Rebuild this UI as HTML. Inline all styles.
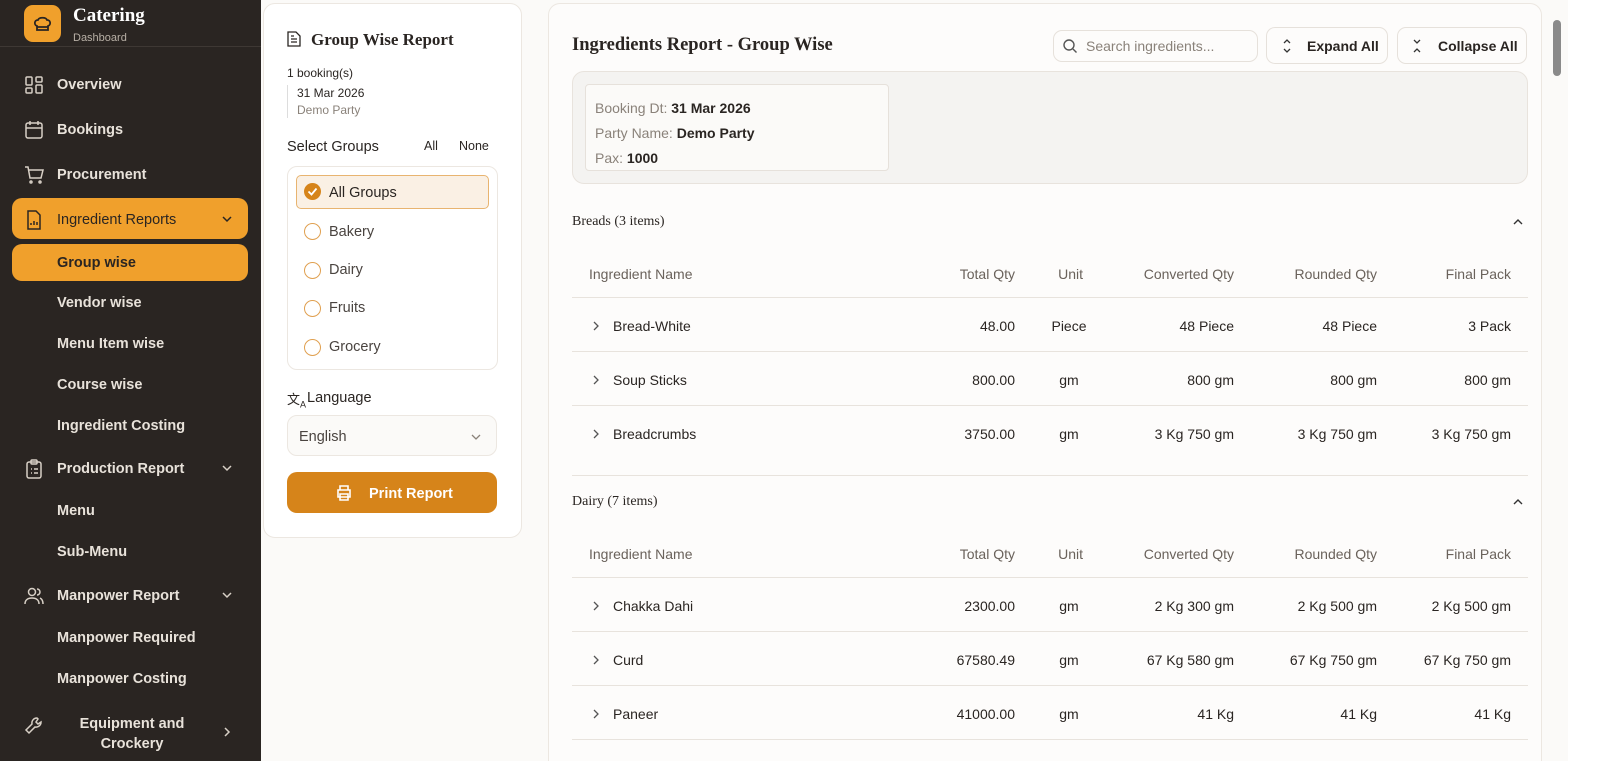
<!DOCTYPE html>
<html style="overflow:hidden;height:761px"><head><meta charset="utf-8"><style>
*{box-sizing:border-box;margin:0;padding:0}
body{width:1600px;height:761px;overflow:hidden;background:#fbfaf8;font-family:"Liberation Sans",sans-serif;color:#2a2522;position:relative}
.sb{position:absolute;left:0;top:0;width:261px;height:761px;background:#2a2522;color:#e8e2da}
.logo{position:absolute;left:24px;top:5px;width:37px;height:37px;border-radius:9px;background:#f0a02c}
.brand{position:absolute;left:73px;top:5px;font-family:"Liberation Serif",serif;font-weight:bold;font-size:19px;color:#fff}
.brandsub{position:absolute;left:73px;top:32px;font-size:11px;color:#b8b0a6}
.sep{position:absolute;left:0;top:46px;width:261px;height:1px;background:#3e3834}
.it{position:absolute;left:57px;font-size:14.5px;font-weight:bold;color:#e8e2da}
.ic{position:absolute;left:24px;width:20px;height:20px}
.act{position:absolute;left:12px;width:236px;border-radius:10px;background:#f0a02c}
.chev{position:absolute;left:220px;width:14px;height:14px}
.lp{position:absolute;left:263px;top:3px;width:259px;height:535px;background:#fff;border:1px solid #ece7e1;border-radius:12px}
.mc{position:absolute;left:548px;top:3px;width:994px;height:758px;background:#fdfcfb;border:1px solid #ece7e1;border-bottom:none;border-radius:12px 12px 0 0}
.a{position:absolute}
.radio{position:absolute;left:304px;width:17px;height:17px;border:1.5px solid #e0a050;border-radius:50%}
.gl{position:absolute;left:329px;font-size:14.5px;color:#4a4440}
.th{position:absolute;font-size:14px;color:#6a625b}
.td{position:absolute;font-size:14px;color:#2a2522}
.line{position:absolute;left:572px;width:956px;height:1px;background:#e8e3dd}
.btn{position:absolute;border:1px solid #e6e1db;border-radius:9px;background:#fdfcfb;font-size:14px;font-weight:bold}
</style></head><body>
<div class="sb">
<div class="logo"><svg width="37" height="37" viewBox="0 0 37 37"><path d="M13 21c-3-1-3-6 1-6 1-3 8-3 9 0 4 0 4 5 1 6v4h-11z M13 22h11" fill="none" stroke="#2a2522" stroke-width="1.8"/></svg></div>
<div class="brand">Catering</div><div class="brandsub">Dashboard</div><div class="sep"></div>
<svg class="ic" style="top:75px" viewBox="0 0 20 20" fill="none" stroke="#d8d0c6" stroke-width="1.5"><rect x="2" y="2" width="6" height="8" rx="1"/><rect x="12" y="2" width="6" height="5" rx="1"/><rect x="2" y="13" width="6" height="5" rx="1"/><rect x="12" y="10" width="6" height="8" rx="1"/></svg>
<div class="it" style="top:77px">Overview</div>
<svg class="ic" style="top:120px" viewBox="0 0 20 20" fill="none" stroke="#d8d0c6" stroke-width="1.5"><rect x="2" y="3" width="16" height="15" rx="2"/><path d="M2 8h16M6 1v4M14 1v4"/></svg>
<div class="it" style="top:122px">Bookings</div>
<svg class="ic" style="top:165px" viewBox="0 0 20 20" fill="none" stroke="#d8d0c6" stroke-width="1.5"><path d="M1 2h3l2 11h11l2-8H5"/><circle cx="7" cy="17" r="1"/><circle cx="16" cy="17" r="1"/></svg>
<div class="it" style="top:167px">Procurement</div>
<div class="act" style="top:198px;height:41px"></div>
<svg class="ic" style="top:210px" viewBox="0 0 20 20" fill="none" stroke="#2a2522" stroke-width="1.5"><path d="M4 1h8l4 4v14H4z M7 15v-2M10 15v-4M13 15v-3"/></svg>
<div class="it" style="top:212px;color:#2a2522;font-weight:normal">Ingredient Reports</div>
<svg class="chev" style="top:212px" viewBox="0 0 14 14" fill="none" stroke="#2a2522" stroke-width="1.5"><path d="M3 5l4 4 4-4"/></svg>
<div class="act" style="top:244px;height:37px"></div>
<div class="it" style="top:255px;color:#2a2522">Group wise</div>
<div class="it" style="top:295px">Vendor wise</div>
<div class="it" style="top:336px">Menu Item wise</div>
<div class="it" style="top:377px">Course wise</div>
<div class="it" style="top:418px">Ingredient Costing</div>
<svg class="ic" style="top:459px" viewBox="0 0 20 20" fill="none" stroke="#d8d0c6" stroke-width="1.5"><rect x="3" y="3" width="14" height="16" rx="2"/><rect x="7" y="1" width="6" height="4" rx="1"/><path d="M7 10h1M10 10h4M7 14h1M10 14h4"/></svg>
<div class="it" style="top:461px">Production Report</div>
<svg class="chev" style="top:461px" viewBox="0 0 14 14" fill="none" stroke="#d8d0c6" stroke-width="1.5"><path d="M3 5l4 4 4-4"/></svg>
<div class="it" style="top:503px">Menu</div>
<div class="it" style="top:544px">Sub-Menu</div>
<svg class="ic" style="top:586px" viewBox="0 0 20 20" fill="none" stroke="#d8d0c6" stroke-width="1.5"><circle cx="8" cy="6" r="3.5"/><path d="M1 18c0-4 3-6 7-6s7 2 7 6M13 3a3 3 0 010 6M16 12c2 1 3 3 3 6"/></svg>
<div class="it" style="top:588px">Manpower Report</div>
<svg class="chev" style="top:588px" viewBox="0 0 14 14" fill="none" stroke="#d8d0c6" stroke-width="1.5"><path d="M3 5l4 4 4-4"/></svg>
<div class="it" style="top:630px">Manpower Required</div>
<div class="it" style="top:671px">Manpower Costing</div>
<svg class="ic" style="top:716px" viewBox="0 0 20 20" fill="none" stroke="#d8d0c6" stroke-width="1.5"><path d="M13 2a5 5 0 00-5 6L2 14l3 3 6-6a5 5 0 006-5l-3 2-2-2 2-3z"/></svg>
<div class="it" style="top:714px;left:62px;text-align:center;width:140px;line-height:20px">Equipment and<br>Crockery</div>
<svg class="chev" style="top:725px" viewBox="0 0 14 14" fill="none" stroke="#d8d0c6" stroke-width="1.5"><path d="M5 3l4 4-4 4"/></svg>
</div>

<div class="lp"></div>
<svg class="a" style="left:287px;top:31px" width="14" height="16" viewBox="0 0 14 16" fill="none" stroke="#2a2522" stroke-width="1.3"><path d="M1 1h8l4 4v10H1z M4 8h6M4 11h6M4 5h3"/></svg>
<div class="a" style="left:311px;top:30px;font-family:'Liberation Serif',serif;font-weight:bold;font-size:17px">Group Wise Report</div>
<div class="a" style="left:287px;top:66px;font-size:12px">1 booking(s)</div>
<div class="a" style="left:287px;top:85px;width:1px;height:33px;background:#ddd"></div>
<div class="a" style="left:297px;top:86px;font-size:12px">31 Mar 2026</div>
<div class="a" style="left:297px;top:103px;font-size:12px;color:#8a827a">Demo Party</div>
<div class="a" style="left:287px;top:139px;font-size:14.5px">Select Groups</div>
<div class="a" style="left:424px;top:139px;font-size:12.5px">All</div>
<div class="a" style="left:459px;top:139px;font-size:12.5px">None</div>
<div class="a" style="left:287px;top:166px;width:211px;height:204px;border:1px solid #ece7e1;border-radius:10px"></div>
<div class="a" style="left:296px;top:175px;width:193px;height:34px;border:1.5px solid #e8b470;border-radius:5px;background:#faf0e4"></div>
<div class="a" style="left:304px;top:183px;width:17px;height:17px;border-radius:50%;background:#d6841a"><svg width="17" height="17"><path d="M4.5 8.5l3 3 5-6" fill="none" stroke="#fff" stroke-width="1.8"/></svg></div>
<div class="gl" style="top:185px;color:#2a2522">All Groups</div>
<div class="radio" style="top:223px"></div><div class="gl" style="top:224px">Bakery</div>
<div class="radio" style="top:262px"></div><div class="gl" style="top:262px">Dairy</div>
<div class="radio" style="top:300px"></div><div class="gl" style="top:300px">Fruits</div>
<div class="radio" style="top:339px"></div><div class="gl" style="top:339px">Grocery</div>
<div class="a" style="left:287px;top:389px;font-size:13px">文<sub style="font-size:9px">A</sub></div>
<div class="a" style="left:307px;top:390px;font-size:14.5px">Language</div>
<div class="a" style="left:287px;top:415px;width:210px;height:41px;border:1px solid #ece7e1;border-radius:10px;background:#fbfaf8"></div>
<div class="a" style="left:299px;top:429px;font-size:14.5px;color:#4a4440">English</div>
<svg class="a" style="left:469px;top:430px" width="14" height="14" fill="none" stroke="#8a827a" stroke-width="1.3"><path d="M3 5l4 4 4-4"/></svg>
<div class="a" style="left:287px;top:472px;width:210px;height:41px;border-radius:10px;background:#d6841a"></div>
<svg class="a" style="left:335px;top:484px" width="18" height="18" fill="none" stroke="#fff" stroke-width="1.6"><path d="M5 6V2h8v4M3 6h12v7H3zM5 10h8v6H5z"/></svg>
<div class="a" style="left:369px;top:486px;font-size:14.5px;font-weight:bold;color:#fff">Print Report</div>

<div class="mc"></div>
<div class="a" style="left:572px;top:35px;font-family:'Liberation Serif',serif;font-weight:bold;font-size:18.5px">Ingredients Report - Group Wise</div>
<div class="btn" style="left:1053px;top:30px;width:205px;height:32px;font-weight:normal"></div>
<svg class="a" style="left:1062px;top:38px" width="16" height="16" fill="none" stroke="#555" stroke-width="1.4"><circle cx="7" cy="7" r="5"/><path d="M11 11l3.5 3.5"/></svg>
<div class="a" style="left:1086px;top:38px;font-size:14px;color:#8a827a">Search ingredients...</div>
<div class="btn" style="left:1266px;top:27px;width:122px;height:37px"></div>
<svg class="a" style="left:1281px;top:39px" width="12" height="14" fill="none" stroke="#333" stroke-width="1.3"><path d="M3 4l3-3 3 3M3 10l3 3 3-3"/></svg>
<div class="a" style="left:1307px;top:38px;font-size:14px;font-weight:bold">Expand All</div>
<div class="btn" style="left:1397px;top:27px;width:130px;height:37px"></div>
<svg class="a" style="left:1411px;top:39px" width="12" height="14" fill="none" stroke="#333" stroke-width="1.3"><path d="M3 1l3 3 3-3M3 13l3-3 3 3"/></svg>
<div class="a" style="left:1438px;top:38px;font-size:14px;font-weight:bold">Collapse All</div>
<div class="a" style="left:572px;top:71px;width:956px;height:113px;border:1px solid #e8e3dd;border-radius:12px;background:#f4f3f1"></div>
<div class="a" style="left:585px;top:84px;width:304px;height:87px;border:1px solid #e6e1db;border-radius:4px;background:#fbfaf8"></div>
<div class="a" style="left:595px;top:96px;font-size:14px;line-height:25px;color:#8a827a">Booking Dt: <b style="color:#2a2522">31 Mar 2026</b><br>Party Name: <b style="color:#2a2522">Demo Party</b><br>Pax: <b style="color:#2a2522">1000</b></div>

<div class="a" style="left:572px;top:214px;font-family:'Liberation Serif',serif;font-size:14px">Breads (3 items)</div>
<svg class="a" style="left:1512px;top:216px" width="12" height="12" fill="none" stroke="#333" stroke-width="1.4"><path d="M2 8l4-4 4 4"/></svg>
<div class="a" style="left:572px;top:475px;width:956px;height:1px;background:#e8e3dd"></div>
<div class="a" style="left:572px;top:494px;font-family:'Liberation Serif',serif;font-size:14px">Dairy (7 items)</div>
<svg class="a" style="left:1512px;top:496px" width="12" height="12" fill="none" stroke="#333" stroke-width="1.4"><path d="M2 8l4-4 4 4"/></svg>

<div id="t"></div>
<script>
function tbl(y,rows,last){var h='';
h+='<div class="th" style="left:589px;top:'+(y-8)+'px">Ingredient Name</div>';
var cols=[[1015,'Total Qty'],[1083,'Unit'],[1234,'Converted Qty'],[1377,'Rounded Qty'],[1511,'Final Pack']];
cols.forEach(function(c){h+='<div class="th" style="right:'+(1600-c[0])+'px;top:'+(y-8)+'px">'+c[1]+'</div>'});
h+='<div class="line" style="top:'+(y+23)+'px"></div>';
rows.forEach(function(r,i){var ry=y+52+54*i;
h+='<svg class="a" style="left:591px;top:'+(ry-6)+'px" width="10" height="12" fill="none" stroke="#555" stroke-width="1.3"><path d="M3 2l4 4-4 4"/></svg>';
h+='<div class="td" style="left:613px;top:'+(ry-8)+'px">'+r[0]+'</div>';
h+='<div class="td" style="right:'+(1600-1015)+'px;top:'+(ry-8)+'px">'+r[1]+'</div>';
h+='<div class="td" style="left:1039px;width:60px;text-align:center;top:'+(ry-8)+'px">'+r[2]+'</div>';
h+='<div class="td" style="right:'+(1600-1234)+'px;top:'+(ry-8)+'px">'+r[3]+'</div>';
h+='<div class="td" style="right:'+(1600-1377)+'px;top:'+(ry-8)+'px">'+r[4]+'</div>';
h+='<div class="td" style="right:'+(1600-1511)+'px;top:'+(ry-8)+'px">'+r[5]+'</div>';
if(i<rows.length-1||last)h+='<div class="line" style="top:'+(ry+25)+'px"></div>';});
return h;}
document.getElementById('t').innerHTML=tbl(274,[['Bread-White','48.00','Piece','48 Piece','48 Piece','3 Pack'],['Soup Sticks','800.00','gm','800 gm','800 gm','800 gm'],['Breadcrumbs','3750.00','gm','3 Kg 750 gm','3 Kg 750 gm','3 Kg 750 gm']],false)+tbl(554,[['Chakka Dahi','2300.00','gm','2 Kg 300 gm','2 Kg 500 gm','2 Kg 500 gm'],['Curd','67580.49','gm','67 Kg 580 gm','67 Kg 750 gm','67 Kg 750 gm'],['Paneer','41000.00','gm','41 Kg','41 Kg','41 Kg']],true);
</script>
<div class="a" style="left:1553px;top:20px;width:8px;height:56px;border-radius:4px;background:#8a8a8a"></div>
<div class="a" style="left:1568px;top:0;width:32px;height:761px;background:#fff"></div>
</body></html>
